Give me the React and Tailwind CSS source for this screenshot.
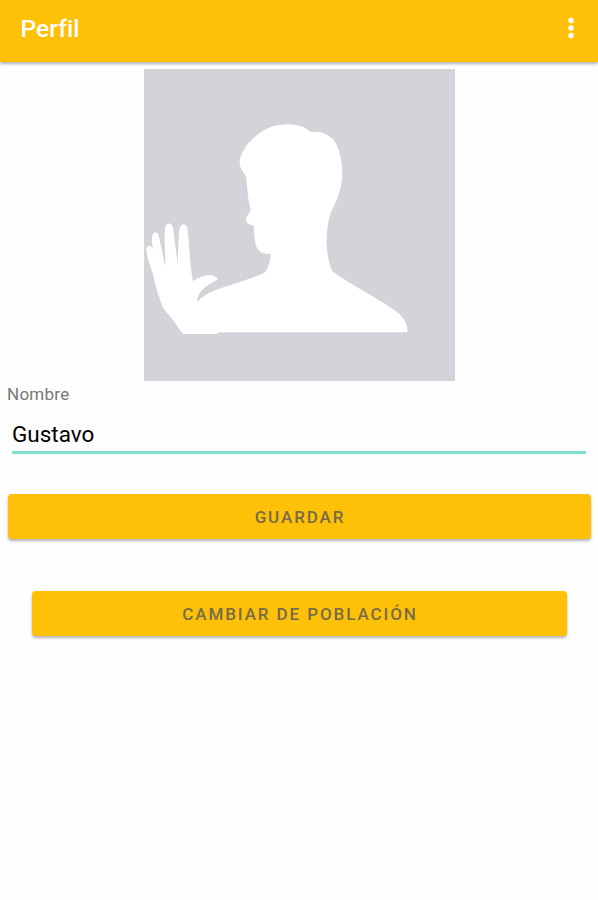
import { useState } from "react";

/* ======================
   Avatar
====================== */
function Avatar() {
  return (
    <svg
      className="mx-auto mt-[7px] block h-[312px] w-[311px] bg-[#d2d4da]"
      viewBox="144 69 311 312"
      role="img"
      fill="#fff"
    >
      {/* Head and shoulders */}
      <path d="M239.6 162C240.5 154 245 146.5 250 141.7C256 135 264 129.5 270 127.3C276 125 282 124.3 288 124.3C298 124.5 305 127 310.7 132C314 131.6 318 131.6 321.7 132.3C328 134.5 332 138 335 142C339.5 149 342.5 162 342.3 174C342.2 188 337 200 332.5 209C328 218 326.6 231 326.6 243C327 253 329 265 332.7 271.7C344 280 360 288.5 373.3 296.7C381 301.5 390 306.5 396.7 311.7C404 317.5 408.5 326 407.3 332.3H218C217.5 333.5 217 334 215 334H183.3C179 329.5 175.5 323.5 171.7 318.3C168 313.5 164.5 311 162.7 306.7C158.5 297 155 284 152.7 273.3C150 265 147 257.5 146.3 250C146.2 247 148.3 244.8 150.5 246.2L152.9 248C152 244 151.4 239 152.3 236C153 231 157.5 230.5 159 236.7C161.5 247 163 257 165.2 266.7C165.6 253 164 240 165 228C166 222 172 222 173 228C174.6 240 176.3 252 177.7 264C178.2 252 178.2 241 179.3 230C180 222.5 187.2 222.5 187.8 230C189.2 246 190 265 192.8 281C196 279.5 200 277.3 204.5 275.8C209 274.3 214 274.8 218 279C214 281.5 209 284 205 287.5C200.5 291 196.8 296.5 197.5 302.3C199.5 299 203 296.5 206.7 294.3C212 291 218 289.2 223 287.5C234 283.5 246 280.5 256.7 276C260 274.6 264 273.5 266 271C269 266 270.4 260 270.8 254.3C267 253.5 263 254 260 251.5C253.5 246 254.7 234 253.5 225.5C251 224.8 248.5 224.3 246.7 222.5C245 219 247 216.5 248.5 214C250 212 250.7 210 250 207C247.5 198 247.5 186 245.9 176.5C243 171.5 239.5 168 239.6 162Z" />
    </svg>
  );
}

/* ======================
   Profile screen
====================== */
export default function App() {
  const [name, setName] = useState("Gustavo");

  return (
    <div className="min-h-screen bg-[#fefefe] font-['Roboto',sans-serif]">
      {/* TOP BAR */}
      <header className="flex h-[62px] items-start justify-between bg-[#ffc107] pl-[20.5px] pr-[22px] shadow-[0_2px_3px_rgba(0,0,0,0.3)]">
        <h1 className="mt-[13px] text-[24.5px] leading-8 font-medium tracking-[0.1px] text-white">
          Perfil
        </h1>
        <button className="mt-[17px]">
          <svg className="block h-[22px] w-[10px]" viewBox="0 0 10 22" fill="#fff">
            <circle cx="5" cy="3.5" r="2.7" />
            <circle cx="5" cy="11" r="2.7" />
            <circle cx="5" cy="18.5" r="2.7" />
          </svg>
        </button>
      </header>

      <main>
        <Avatar />

        {/* NAME */}
        <label className="block px-[7px] pt-[3px]">
          <span className="block text-[17px] leading-5 tracking-[0.25px] text-[#777]">
            Nombre
          </span>
          <input
            className="mx-[5px] mt-[10px] block h-[40px] w-[574px] border-b-3 border-[#7be0cf] pt-[2px] text-[22.5px] text-black outline-none"
            value={name}
            onChange={(e) => setName(e.target.value)}
          />
        </label>

        {/* ACTIONS */}
        <div className="flex flex-col gap-[52px] pt-[40px]">
          <button className="ml-[8px] mr-[7px] h-[45px] rounded bg-[#ffc107] pt-[2px] pl-[1px] text-[17px] font-medium tracking-[1.9px] text-[#766c48] shadow-[0_2px_3px_rgba(0,0,0,0.3)]">
            GUARDAR
          </button>
          <button className="ml-[32px] mr-[31px] h-[45px] rounded bg-[#ffc107] pt-[2px] pl-[1px] text-[17px] font-medium tracking-[1.9px] text-[#766c48] shadow-[0_2px_3px_rgba(0,0,0,0.3)]">
            CAMBIAR DE POBLACIÓN
          </button>
        </div>
      </main>
    </div>
  );
}
